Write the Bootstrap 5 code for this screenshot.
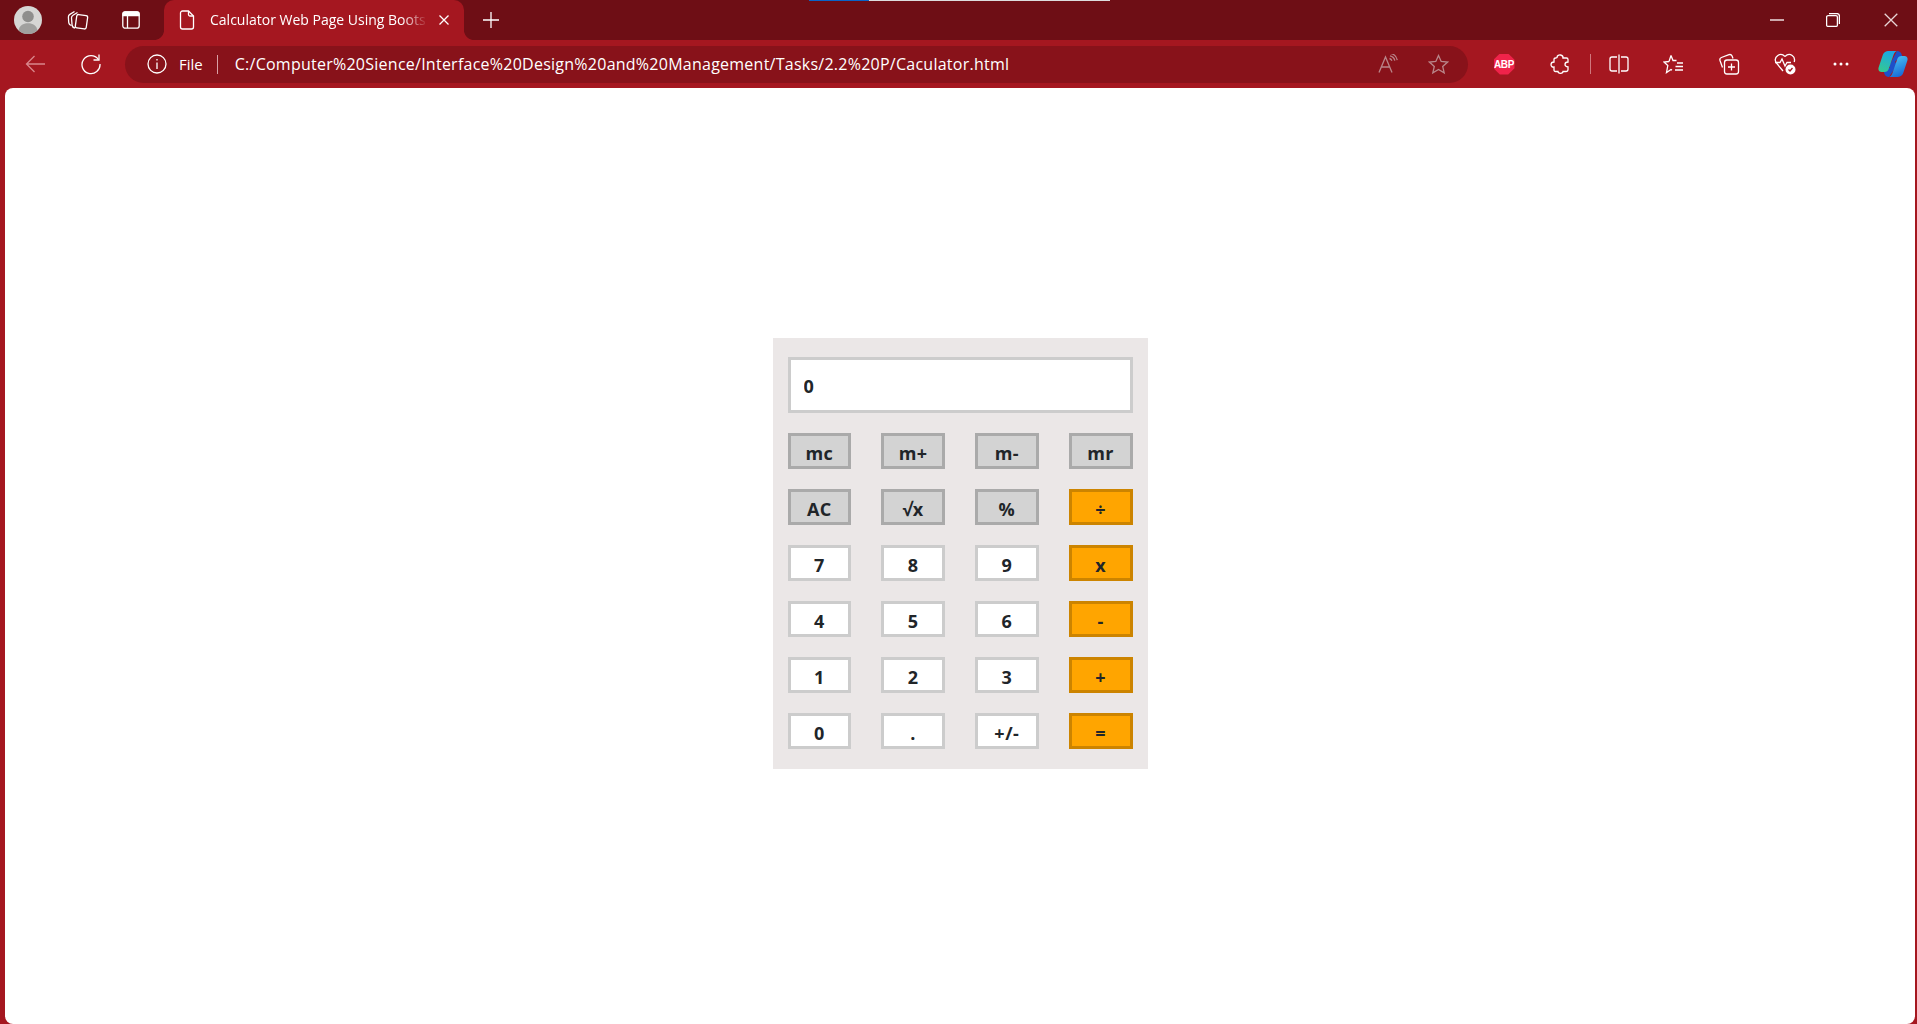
<!DOCTYPE html>
<html lang="en">
<head>
  <meta charset="UTF-8" />
  <meta name="viewport" content="width=device-width, initial-scale=1.0"/>
  <title>Calculator Web Page Using Bootstrap</title>
  <link href="https://cdn.jsdelivr.net/npm/bootstrap@5.3.0/dist/css/bootstrap.min.css" rel="stylesheet">
  <style>
    :root { --strip: #6e0e15; --bar: #a51720; --omni: #88121a; }
    html, body { height: 100%; }
    body { background: var(--bar); overflow: hidden; font-family: "Open Sans", "Noto Sans", sans-serif; color: #212529; }
    svg { display: block; fill: none; stroke: #fff; stroke-width: 1.3; }
    svg.icon-solid { stroke: none; }
    svg.icon-back { stroke: #d9868b; }
    svg.icon-dim { stroke: #b98589; }
    svg.icon-close { stroke: #e8d6d7; margin-left: 4px; }

    /* browser chrome */
    .tab-strip { height: 40px; background: var(--strip); position: relative; }
    .load-line { position: absolute; top: 0; left: 809px; width: 301px; height: 1px; background: linear-gradient(90deg, #0a64c8 20%, #ddd 20%); }
    .strip-slot { width: 53px; height: 40px; }
    .strip-start { width: 164px; padding-left: 4px; }
    .avatar-slot { width: 47px; }
    .win-tab { width: 300px; height: 40px; background: var(--bar); border-radius: 10px 10px 0 0; position: relative; color: #fff; font-size: 14px; padding-left: 13px; }
    .win-tab::before, .win-tab::after { content: ""; position: absolute; bottom: 0; width: 10px; height: 10px; }
    .win-tab::before { left: -10px; background: radial-gradient(circle at 0 0, var(--strip) 9.6px, var(--bar) 10.4px); }
    .win-tab::after { right: -10px; background: radial-gradient(circle at 100% 0, var(--strip) 9.6px, var(--bar) 10.4px); }
    .tab-title { width: 218px; margin-left: 13px; padding-bottom: 2px; white-space: nowrap; -webkit-mask-image: linear-gradient(90deg, #000 88%, transparent 100%); mask-image: linear-gradient(90deg, #000 88%, transparent 100%); }
    .tab-close { margin-left: 10px; }
    .new-tab { margin-left: 5px; width: 44px; }
    .win-btn { width: 56px; height: 38px; }
    .tool-row { height: 48px; padding-left: 7px; }
    .tool-slot { width: 56px; height: 48px; }
    .slot-tight { width: 55px; }
    .omni { width: 1343px; height: 37px; margin-left: 7px; margin-right: 8px; background: var(--omni); border-radius: 19px; color: #fff; font-size: 16px; padding-left: 22px; padding-right: 5px; }
    .omni-sep { width: 1px; height: 19px; background: #d9a0a5; margin: 0 17px 0 14px; }
    .omni-file { margin-left: 12px; font-size: 15px; }
    .omni-url { white-space: nowrap; letter-spacing: .25px; }
    .omni-slot { width: 50px; height: 37px; }
    .tool-sep { width: 1px; height: 20px; background: #d0777d; margin-left: 2px; }
    .abp-badge { width: 21px; height: 21px; background: #f0234a; clip-path: polygon(30% 0, 70% 0, 100% 30%, 100% 70%, 70% 100%, 30% 100%, 0 70%, 0 30%); color: #fff; font-size: 10px; letter-spacing: -.3px; font-weight: 700; font-family: "Liberation Sans", sans-serif; }
    .copilot-wrap { margin-right: 9px; }

    /* page */
    .page-area { height: 936px; margin: 0 2px 0 5px; background: #fff; border-radius: 8px; padding-top: 250px; }
    .calc-panel { width: 375px; height: 431px; background: #ebe7e7; padding: 19px 15px 20px; }
    .calc-display.form-control { height: 56px; border: 3px solid #ccc; border-radius: 0; padding: 2px 13px 0; font-size: 18px; font-weight: 700; color: #212529; margin-bottom: 20px; font-family: inherit; }
    .key-grid { display: grid; grid-template-columns: repeat(4, 1fr); gap: 20px 30px; }
    .calc-key.btn { height: 36px; padding: 4px 0 0; border: 3px solid #ccc; border-radius: 0; background: #fff; color: #212529; font-size: 18px; font-weight: 700; line-height: 26px; letter-spacing: .5px; }
    .calc-key.key-grey { background: #d3d3d3; border-color: #aaa; }
    .calc-key.key-orange { background: #ffa500; border-color: #cc8400; }
  </style>
</head>
<body>

  <div class="tab-strip d-flex align-items-center">
    <div class="load-line"></div>
    <div class="strip-start d-flex align-items-center">
      <div class="strip-slot avatar-slot d-flex align-items-center justify-content-center">
        <svg class="icon-solid" width="28" height="28" viewBox="0 0 28 28"><circle cx="14" cy="14" r="14" fill="#d6d6d4"/><circle cx="14" cy="10.5" r="5.8" fill="#8e8e8c"/><path d="M4.5 24.5c1-5 4.5-7.2 9.5-7.2s8.500 2.200 9.500 7.200a14 14 0 0 1-19 0z" fill="#a0a09e"/></svg>
      </div>
      <div class="strip-slot d-flex align-items-center justify-content-center">
        <svg width="22" height="22" viewBox="0 0 22 22"><rect x="9" y="6" width="11" height="13.500" rx="1.800" transform="rotate(8 14.500 12.700)"/><path d="M8 19c-1.600-.2-2.600-1-2.900-2.500L4.500 9c-.1-1.300.4-2.200 1.500-2.800l4.500-2.700"/><path d="M4.500 16.500C2.800 16 1.800 15 1.700 13.300L1.400 8c0-1.200.5-2 1.500-2.600L7.500 2.500"/></svg>
      </div>
      <div class="strip-slot d-flex align-items-center justify-content-center">
        <svg width="18" height="18" viewBox="0 0 18 18"><rect x=".8" y=".8" width="16.400" height="16.400" rx="2.500"/><path d="M1 4.500V3a2 2 0 0 1 2-2h12a2 2 0 0 1 2 2v1.500z" fill="#fff"/><path d="M5.500 5v12"/></svg>
      </div>
    </div>
    <div class="win-tab d-flex align-items-center">
      <svg width="20" height="20" viewBox="0 0 20 20"><path d="M3.500 3a2 2 0 0 1 2-2h6l5 5v11a2 2 0 0 1-2 2h-9a2 2 0 0 1-2-2z"/><path d="M11.500 1v3.500a1.500 1.500 0 0 0 1.500 1.500h3.500"/></svg>
      <div class="tab-title">Calculator Web Page Using Boots</div>
      <svg class="tab-close" width="12" height="12" viewBox="0 0 12 12" stroke-width="1.500"><path d="M1.500 1.500l9 9M10.500 1.500l-9 9"/></svg>
    </div>
    <div class="new-tab d-flex align-items-center justify-content-center">
      <svg width="18" height="18" viewBox="0 0 18 18"><path d="M9 1v16M1 9h16"/></svg>
    </div>
    <div class="ms-auto d-flex align-items-center">
      <div class="win-btn d-flex align-items-center justify-content-center">
        <svg width="14" height="2" viewBox="0 0 14 2"><path d="M0 1h14"/></svg>
      </div>
      <div class="win-btn d-flex align-items-center justify-content-center">
        <svg width="14" height="14" viewBox="0 0 14 14"><rect x=".6" y="2.600" width="10.800" height="10.800" rx="1.500"/><path d="M3 .6h8a2.400 2.400 0 0 1 2.400 2.400v8"/></svg>
      </div>
      <div class="win-btn d-flex align-items-center justify-content-center">
        <svg class="icon-close" width="14" height="14" viewBox="0 0 14 14"><path d="M.7.700l12.600 12.600M13.300.7L.7 13.300"/></svg>
      </div>
    </div>
  </div>

  <div class="tool-row d-flex align-items-center">
    <div class="tool-slot d-flex align-items-center justify-content-center">
      <svg class="icon-back" width="21" height="18" viewBox="0 0 21 18"><path d="M20 9H1.500M9.500 1L1.500 9l8 8"/></svg>
    </div>
    <div class="tool-slot slot-tight d-flex align-items-center justify-content-center">
      <svg width="22" height="22" viewBox="0 0 22 22"><path d="M18.400 6.500A9 9 0 1 0 20 11"/><path d="M19 1.500v5.500h-5.500"/></svg>
    </div>
    <div class="omni d-flex align-items-center">
      <svg width="20" height="20" viewBox="0 0 20 20"><circle cx="10" cy="10" r="9"/><path d="M10 8.500v6.500M10 5v1.500"/></svg>
      <span class="omni-file">File</span>
      <div class="omni-sep"></div>
      <span class="omni-url flex-grow-1">C:/Computer%20Sience/Interface%20Design%20and%20Management/Tasks/2.2%20P/Caculator.html</span>
      <div class="omni-slot d-flex align-items-center justify-content-center">
        <svg class="icon-dim" width="20" height="20" viewBox="0 0 20 20"><path d="M1 18.500L7.500 3l6.500 15.500M3.500 13h8"/><path d="M11.500 4.500c1.200.3 2 1 2.400 2.200M12 1.800c2.600.5 4.300 2.200 4.800 4.800M12.500 -.6c3.600.6 6 3 6.800 6.800"/></svg>
      </div>
      <div class="omni-slot d-flex align-items-center justify-content-center">
        <svg class="icon-dim" width="21" height="21" viewBox="0 0 21 21"><path d="M10.500 1.500l2.700 6 6.300.6-4.800 4.300 1.500 6.400-5.700-3.400-5.700 3.400 1.500-6.400L1.500 8.100l6.300-.6z"/></svg>
      </div>
    </div>
    <div class="tool-slot d-flex align-items-center justify-content-center">
      <div class="abp-badge d-flex align-items-center justify-content-center">ABP</div>
    </div>
    <div class="tool-slot d-flex align-items-center justify-content-center">
      <svg width="20" height="20" viewBox="0 0 20 20"><path d="M7 3.500C7 1.500 9 .8 10.500 1c1.600.3 2.700 1.300 2.500 3h3.500c1 0 1.500.6 1.500 1.500V8c-1.800 0-3 .8-3 2.300s1.200 2.500 3 2.500v3c0 1-.6 1.700-1.700 1.700H13c0 1-1.200 1.800-2.500 1.800S8 18.500 8 17.500H5.500c-1 0-1.500-.6-1.500-1.500v-3c-1.700.3-3-.6-3-2.200S2.300 8 4 8V5.500C4 4.400 4.600 4 5.500 4z"/></svg>
    </div>
    <div class="tool-sep"></div>
    <div class="tool-slot slot-tight d-flex align-items-center justify-content-center">
      <svg width="20" height="20" viewBox="0 0 20 20"><path d="M8 3H3a2 2 0 0 0-2 2v10a2 2 0 0 0 2 2h5M12 3h5a2 2 0 0 1 2 2v10a2 2 0 0 1-2 2h-5M10 .5v19"/></svg>
    </div>
    <div class="tool-slot slot-tight d-flex align-items-center justify-content-center">
      <svg width="21" height="21" viewBox="0 0 21 21"><path d="M8 1.500l2 5h3.500M6 7.500L1 8l3.800 3.500L3.500 18.500 8 15.500l1 .6M6 7.500L8 1.500"/><path d="M14 9h6M12.500 12.500H20M12 16h8"/></svg>
    </div>
    <div class="tool-slot d-flex align-items-center justify-content-center">
      <svg width="22" height="22" viewBox="0 0 22 22"><path d="M4.500 14.500L2 7.500c-.4-1.300.2-2.500 1.400-3L11 1.700c1.300-.4 2.500.1 3.100 1.300l.9 2.500"/><rect x="6.500" y="7" width="14" height="14" rx="2.500"/><path d="M13.500 10.500v7M10 14h7"/></svg>
    </div>
    <div class="tool-slot d-flex align-items-center justify-content-center">
      <svg width="22" height="22" viewBox="0 0 22 22"><path d="M11 3.500C9 1.500 6 1 3.800 2.500 1.500 4 .8 7 2 9.500l7 8.500M11 3.500c2-2 5-2.500 7.200-1 2 1.300 2.800 3.800 2 6.500"/><path d="M1 9.500h5l2-3.500 3 7 2-3.500h4"/><circle cx="16.500" cy="16.500" r="5" fill="#fff" stroke="none"/><path d="M14.500 16.500l1.500 1.500 2.500-3" stroke="#a51720"/></svg>
    </div>
    <div class="tool-slot d-flex align-items-center justify-content-center">
      <svg class="icon-solid" width="16" height="4" viewBox="0 0 16 4"><circle cx="2" cy="2" r="1.500" fill="#fff"/><circle cx="8" cy="2" r="1.500" fill="#fff"/><circle cx="14" cy="2" r="1.500" fill="#fff"/></svg>
    </div>
    <div class="ms-auto copilot-wrap d-flex align-items-center">
      <svg class="icon-solid" width="30" height="28" viewBox="0 0 30 28">
        <defs>
          <linearGradient id="cpA" x1="0.6" y1="0" x2="0.2" y2="1"><stop offset="0" stop-color="#1aa7e8"/><stop offset="1" stop-color="#35c98f"/></linearGradient>
          <linearGradient id="cpB" x1="0.2" y1="0" x2="0.6" y2="1"><stop offset="0" stop-color="#4ec6f0"/><stop offset="1" stop-color="#1668d8"/></linearGradient>
        </defs>
        <path d="M19 1c2.500 0 4 1.300 4.700 3.500L25 9c-3-.8-6.500 0-8 3l-3 8-3-4z" fill="#1e50c8"/>
        <path d="M11 27c-2.500 0-4-1.300-4.700-3.500L5 19c3 .8 6.500 0 8-3l3-6 3 5z" fill="#1e50c8"/>
        <path d="M10 1C7 1.300 5.300 3 4.600 5.500L.6 17.500C-.2 20.600 1.500 22 3.500 22h3c2 0 3.500-1 4.200-3L15.500 5c.7-2 2-4 4-4z" fill="url(#cpA)"/>
        <path d="M20 27c3 -.3 4.700-2 5.400-4.500l4-12C30.200 7.400 28.500 6 26.500 6h-3c-2 0-3.500 1-4.200 3L14.500 23c-.7 2-2 4-4 4z" fill="url(#cpB)"/>
      </svg>
    </div>
  </div>

  <div class="page-area d-flex justify-content-center align-items-start">
    <div class="calc-panel">
      <input type="text" class="form-control calc-display" value="0" readonly />
      <div class="key-grid" id="keys"></div>
    </div>
  </div>

  <script>
    const keys = [
      ['mc', 'key-grey'], ['m+', 'key-grey'], ['m-', 'key-grey'], ['mr', 'key-grey'],
      ['AC', 'key-grey'], ['√x', 'key-grey'], ['%', 'key-grey'], ['÷', 'key-orange'],
      ['7', ''], ['8', ''], ['9', ''], ['x', 'key-orange'],
      ['4', ''], ['5', ''], ['6', ''], ['-', 'key-orange'],
      ['1', ''], ['2', ''], ['3', ''], ['+', 'key-orange'],
      ['0', ''], ['.', ''], ['+/-', ''], ['=', 'key-orange']
    ];
    const grid = document.getElementById('keys');
    keys.forEach(([label, cls]) => {
      const b = document.createElement('button');
      b.type = 'button';
      b.className = 'btn calc-key ' + cls;
      b.textContent = label;
      grid.appendChild(b);
    });
  </script>
  <script src="https://cdn.jsdelivr.net/npm/bootstrap@5.3.0/dist/js/bootstrap.bundle.min.js"></script>
</body>
</html>
